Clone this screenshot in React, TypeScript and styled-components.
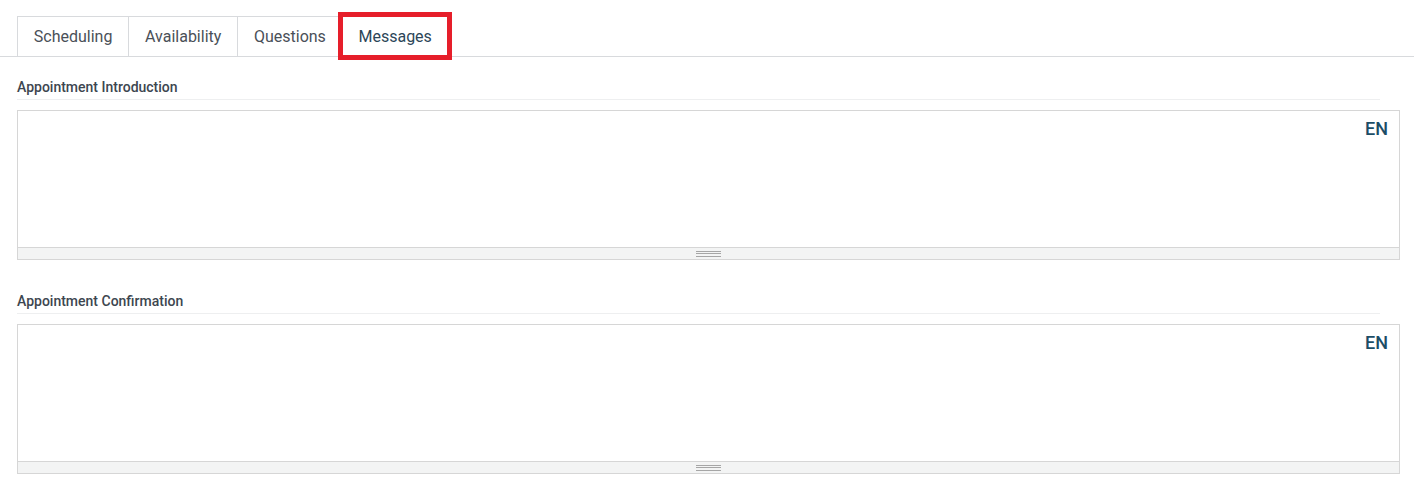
import React from "react";
import styled, { createGlobalStyle } from "styled-components";

const Global = createGlobalStyle`
  html, body { margin: 0; padding: 0; background: #ffffff; }
  body { font-family: Roboto, "Noto Sans", "Liberation Sans", sans-serif; }
  * { box-sizing: border-box; }
`;

const Page = styled.div`
  width: 1414px;
  height: 503px;
  background: #fff;
  overflow: hidden;
`;

const TabRow = styled.div`
  display: flex;
  align-items: flex-end;
  padding: 16px 0 0 17px;
  border-bottom: 1px solid #d8dadd;
  height: 57px;
`;

const Tab = styled.div<{ $active?: boolean; $first?: boolean }>`
  position: relative;
  display: flex;
  align-items: center;
  height: 40px;
  padding: 0 15.8px;
  font-size: 16px;
  color: ${(p) => (p.$active ? "#2c4658" : "#4a5058")};
  background: #fff;
  border-top: 1px solid #d8dadd;
  border-right: 1px solid #d8dadd;
  border-left: ${(p) => (p.$first ? "1px solid #d8dadd" : "none")};

  ${(p) =>
    p.$active &&
    `
    &::after {
      content: "";
      position: absolute;
      left: -5px;
      right: -4px;
      top: -5px;
      bottom: -4px;
      border: 5px solid #e61e2a;
      pointer-events: none;
    }
  `}
`;

const Section = styled.section<{ $top: number }>`
  padding: 0 14px 0 17px;
  margin-top: ${(p) => p.$top}px;
`;

const Heading = styled.div`
  font-size: 14px;
  font-weight: 500;
  color: #3d4650;
  line-height: 20px;
  padding-bottom: 2px;
  border-bottom: 1px solid #eeeff0;
  margin-right: 20px;
  margin-bottom: 10px;
`;

const Editor = styled.div`
  height: 150px;
  border: 1px solid #d6d6d6;
  display: flex;
  flex-direction: column;
`;

const Content = styled.div`
  flex: 1;
  display: flex;
  justify-content: flex-end;
  align-items: flex-start;
  padding: 7px 11px 0 0;
`;

const Lang = styled.span`
  font-size: 18px;
  font-weight: 500;
  color: #1c4d66;
  line-height: 21px;
`;

const ResizeBar = styled.div`
  height: 12px;
  border-top: 1px solid #d6d6d6;
  background: #f3f4f4;
  display: flex;
  justify-content: center;
  align-items: center;
`;

const Grip = styled.div`
  width: 25px;
  height: 6px;
  display: flex;
  flex-direction: column;
  justify-content: space-between;
  span {
    display: block;
    height: 1px;
    background: #a6a6a6;
  }
`;

function HtmlField({ title, top }: { title: string; top: number }) {
  return (
    <Section $top={top}>
      <Heading>{title}</Heading>
      <Editor>
        <Content>
          <Lang>EN</Lang>
        </Content>
        <ResizeBar>
          <Grip>
            <span />
            <span />
            <span />
          </Grip>
        </ResizeBar>
      </Editor>
    </Section>
  );
}

export default function App() {
  return (
    <Page>
      <Global />
      <TabRow>
        <Tab $first>Scheduling</Tab>
        <Tab>Availability</Tab>
        <Tab>Questions</Tab>
        <Tab $active>Messages</Tab>
      </TabRow>
      <HtmlField title="Appointment Introduction" top={20} />
      <HtmlField title="Appointment Confirmation" top={31} />
    </Page>
  );
}
